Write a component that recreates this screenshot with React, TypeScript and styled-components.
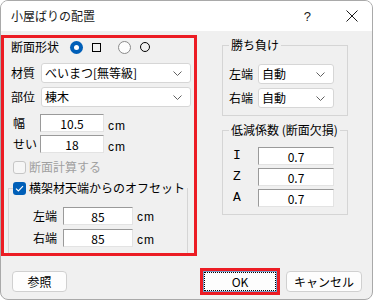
import React from 'react';
import styled, { createGlobalStyle } from 'styled-components';

const GlobalStyle = createGlobalStyle`
  html, body { margin: 0; padding: 0; background: #ffffff; }
  body {
    font-family: "Noto Sans CJK JP", "Noto Sans", sans-serif;
    font-size: 12px;
    color: #000;
  }
  * { box-sizing: border-box; }
`;

const RED = '#ec1c24';

const Window = styled.div`
  width: 373px;
  height: 300px;
  border: 1px solid #a9a9a9;
  border-radius: 8px;
  background: #f0f0f0;
  overflow: hidden;
  display: flex;
  flex-direction: column;
`;

const TitleBar = styled.div`
  height: 30px;
  flex: none;
  background: #ffffff;
  display: flex;
  align-items: center;
  padding: 0 14px 0 10px;
`;

const Title = styled.span`
  flex: 1;
  font-size: 12px;
  line-height: 14px;
  color: #1a1a1a;
`;

const HelpGlyph = styled.span`
  font-family: "Liberation Sans", sans-serif;
  font-size: 13px;
  margin-right: 35px;
  color: #1a1a1a;
`;

const Content = styled.div`
  display: flex;
  align-items: flex-start;
  padding-top: 4px;
`;

const LeftPanel = styled.div`
  width: 196px;
  height: 221px;
  border: 3px solid ${RED};
  overflow: hidden;
  flex: none;
`;

const Row = styled.div<{ $top: number; $left: number; $height: number }>`
  display: flex;
  align-items: center;
  margin-top: ${({ $top }) => $top}px;
  padding-left: ${({ $left }) => $left}px;
  height: ${({ $height }) => $height}px;
`;

const Label = styled.span<{ $width: number; $disabled?: boolean }>`
  flex: none;
  width: ${({ $width }) => $width}px;
  line-height: 14px;
  white-space: nowrap;
  color: ${({ $disabled }) => ($disabled ? '#a0a0a0' : '#000')};
`;

const LatinLabel = styled(Label)`
  font-family: "Liberation Mono", monospace;
  font-size: 13px;
  padding-left: 10px;
`;

const Radio = styled.span<{ $checked?: boolean }>`
  flex: none;
  width: 13px;
  height: 13px;
  border-radius: 50%;
  background: ${({ $checked }) => ($checked ? '#005fb8' : '#fdfdfd')};
  border: ${({ $checked }) => ($checked ? 'none' : '1px solid #8a8a8a')};
  display: flex;
  align-items: center;
  justify-content: center;

  &::after {
    content: '';
    display: ${({ $checked }) => ($checked ? 'block' : 'none')};
    width: 5px;
    height: 5px;
    border-radius: 50%;
    background: #ffffff;
  }
`;

const ShapeMark = styled.span<{ $round?: boolean; $gap: number }>`
  flex: none;
  margin-left: ${({ $gap }) => $gap}px;
  width: ${({ $round }) => ($round ? 10 : 9)}px;
  height: ${({ $round }) => ($round ? 10 : 9)}px;
  border: 1px solid #000;
  border-radius: ${({ $round }) => ($round ? '50%' : '0')};
`;

const RadioGap = styled.span<{ $width: number }>`
  flex: none;
  width: ${({ $width }) => $width}px;
`;

const Select = styled.div<{ $width: number }>`
  flex: none;
  width: ${({ $width }) => $width}px;
  height: 20px;
  background: #ffffff;
  border: 1px solid #d6d6d6;
  border-radius: 3px;
  display: flex;
  align-items: center;
  justify-content: space-between;
  padding: 0 8px 0 3px;
  line-height: 14px;
`;

const Chevron = () => (
  <svg width="9" height="5" viewBox="0 0 9 5" fill="none">
    <path d="M0.5 0.5 L4.5 4.5 L8.5 0.5" stroke="#606060" strokeWidth="1" />
  </svg>
);

const TextBox = styled.input<{ $width: number }>`
  flex: none;
  width: ${({ $width }) => $width}px;
  height: 18px;
  margin: 0;
  padding: 0 2px;
  background: #ffffff;
  border: 1px solid;
  border-color: #9a9a9a #e3e3e3 #e3e3e3 #9a9a9a;
  font-family: "Noto Sans CJK JP", sans-serif;
  font-size: 12px;
  text-align: center;
  color: #000;
  outline: none;
`;

const Unit = styled.span<{ $drop: number }>`
  margin-left: 4px;
  padding-top: ${({ $drop }) => $drop}px;
  font-family: "Liberation Sans", sans-serif;
  font-size: 12px;
  letter-spacing: 1px;
`;

const CheckBox = styled.span<{ $checked?: boolean }>`
  flex: none;
  width: 13px;
  height: 13px;
  border-radius: 3px;
  margin-right: 3px;
  background: ${({ $checked }) => ($checked ? '#005fb8' : '#f6f6f6')};
  border: ${({ $checked }) => ($checked ? 'none' : '1px solid #c6c6c6')};
  display: flex;
  align-items: center;
  justify-content: center;
`;

const CheckMark = () => (
  <svg width="9" height="7" viewBox="0 0 9 7" fill="none">
    <path d="M1 3.6 L3.4 6 L8 1.2" stroke="#ffffff" strokeWidth="1.2" />
  </svg>
);

const OffsetGroup = styled.fieldset`
  margin: 7px 0 0 4px;
  padding: 0 0 20px;
  width: 173px;
  border: 1px solid #d5d5d5;
  border-radius: 0;
`;

const CheckLegend = styled.legend`
  margin-left: 4px;
  padding: 0 2px 0 0;
  display: flex;
  align-items: center;
  height: 14px;
  line-height: 14px;
  white-space: nowrap;
`;

const RightColumn = styled.div`
  margin-left: 25px;
  width: 126px;
  display: flex;
  flex-direction: column;
`;

const Group = styled.fieldset<{ $top: number; $padTop: number; $gap: number }>`
  margin: ${({ $top }) => $top}px 0 0;
  padding: ${({ $padTop }) => $padTop}px 0 7px;
  border: 1px solid #d5d5d5;
  border-radius: 0;
  display: flex;
  flex-direction: column;
  gap: ${({ $gap }) => $gap}px;
`;

const Legend = styled.legend`
  margin-left: 6px;
  padding: 0 2px;
  height: 14px;
  line-height: 14px;
  white-space: nowrap;
`;

const GroupRow = styled.div<{ $left: number; $height: number }>`
  display: flex;
  align-items: center;
  padding-left: ${({ $left }) => $left}px;
  height: ${({ $height }) => $height}px;
`;

const Footer = styled.div`
  display: flex;
  align-items: center;
  margin-top: 15px;
  padding: 0 10px 0 11px;
`;

const Button = styled.button<{ $width: number; $gap?: number; $focused?: boolean }>`
  flex: none;
  position: relative;
  width: ${({ $width }) => $width}px;
  height: 21px;
  margin: 0 0 0 ${({ $gap }) => $gap ?? 0}px;
  padding: 0;
  background: #fdfdfd;
  border: 1px solid ${({ $focused }) => ($focused ? '#7a9cc8' : '#d0d0d0')};
  border-radius: ${({ $focused }) => ($focused ? 0 : 4)}px;
  font-family: "Noto Sans CJK JP", sans-serif;
  font-size: 12px;
  line-height: 14px;
  color: #000;
  outline: ${({ $focused }) => ($focused ? `3px solid ${RED}` : 'none')};
  outline-offset: 0;

  &::after {
    content: '';
    display: ${({ $focused }) => ($focused ? 'block' : 'none')};
    position: absolute;
    inset: 0;
    border: 1px dotted #000;
  }
`;

const Spacer = styled.span`
  flex: 1;
`;

export default function App() {
  return (
    <>
      <GlobalStyle />
      <Window>
        <TitleBar>
          <Title>小屋ばりの配置</Title>
          <HelpGlyph>?</HelpGlyph>
          <svg width="12" height="12" viewBox="0 0 12 12" fill="none">
            <path d="M0.5 0.5 L11.5 11.5 M11.5 0.5 L0.5 11.5" stroke="#1a1a1a" strokeWidth="1" />
          </svg>
        </TitleBar>

        <Content>
          <LeftPanel>
            <Row $top={0} $left={7} $height={18}>
              <Label $width={59}>断面形状</Label>
              <Radio $checked />
              <ShapeMark $gap={9} />
              <RadioGap $width={17} />
              <Radio />
              <ShapeMark $gap={9} $round />
            </Row>

            <Row $top={7} $left={7} $height={20}>
              <Label $width={30}>材質</Label>
              <Select $width={150}>
                <span>べいまつ[無等級]</span>
                <Chevron />
              </Select>
            </Row>

            <Row $top={4} $left={7} $height={20}>
              <Label $width={30}>部位</Label>
              <Select $width={150}>
                <span>棟木</span>
                <Chevron />
              </Select>
            </Row>

            <Row $top={7} $left={9} $height={18}>
              <Label $width={27}>幅</Label>
              <TextBox $width={64} value="10.5" readOnly />
              <Unit $drop={6}>cm</Unit>
            </Row>

            <Row $top={3} $left={9} $height={18}>
              <Label $width={27}>せい</Label>
              <TextBox $width={64} value="18" readOnly />
              <Unit $drop={6}>cm</Unit>
            </Row>

            <Row $top={7} $left={9} $height={14}>
              <CheckBox />
              <Label $width={120} $disabled>断面計算する</Label>
            </Row>

            <OffsetGroup>
              <CheckLegend>
                <CheckBox $checked>
                  <CheckMark />
                </CheckBox>
                横架材天端からのオフセット
              </CheckLegend>
              <Row $top={12} $left={24} $height={18}>
                <Label $width={30}>左端</Label>
                <TextBox $width={70} value="85" readOnly />
                <Unit $drop={2}>cm</Unit>
              </Row>
              <Row $top={4} $left={24} $height={18}>
                <Label $width={30}>右端</Label>
                <TextBox $width={70} value="85" readOnly />
                <Unit $drop={4}>cm</Unit>
              </Row>
            </OffsetGroup>
          </LeftPanel>

          <RightColumn>
            <Group $top={3} $padTop={12} $gap={4}>
              <Legend>勝ち負け</Legend>
              <GroupRow $left={6} $height={20}>
                <Label $width={29}>左端</Label>
                <Select $width={76}>
                  <span>自動</span>
                  <Chevron />
                </Select>
              </GroupRow>
              <GroupRow $left={6} $height={20}>
                <Label $width={29}>右端</Label>
                <Select $width={76}>
                  <span>自動</span>
                  <Chevron />
                </Select>
              </GroupRow>
            </Group>

            <Group $top={7} $padTop={10} $gap={3}>
              <Legend>低減係数 (断面欠損)</Legend>
              {['I', 'Z', 'A'].map((name) => (
                <GroupRow key={name} $left={0} $height={18}>
                  <LatinLabel $width={35}>{name}</LatinLabel>
                  <TextBox $width={76} value="0.7" readOnly />
                </GroupRow>
              ))}
            </Group>
          </RightColumn>
        </Content>

        <Footer>
          <Button $width={55}>参照</Button>
          <Spacer />
          <Button $width={74} $focused>OK</Button>
          <Button $width={76} $gap={9}>キャンセル</Button>
        </Footer>
      </Window>
    </>
  );
}
